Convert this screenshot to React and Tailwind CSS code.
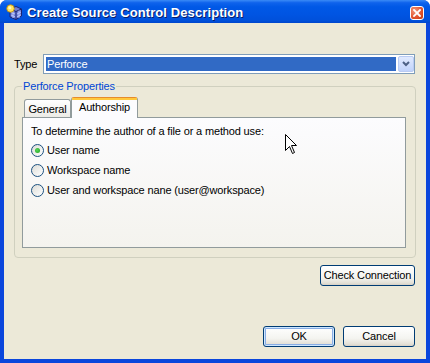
import React from "react";

function TitleIcon() {
  return (
    <svg width="16" height="16" viewBox="0 0 16 16">
      <path d="M4 5 L10 2.5 L15.5 5 L15.5 12 L10 15.5 L4 13 Z" fill="#6f7fd8" stroke="#1b2470" strokeWidth="1" />
      <path d="M4 5 L10 7.5 L15.5 5 M10 7.5 L10 15.5" fill="none" stroke="#1b2470" strokeWidth="1" />
      <path d="M5 8.5 L9 10 M5 11 L9 12.8 M11 10 L15 8 M11 12.8 L15 10.8 M7 6.5 L7 14 M13 6.5 L13 14" fill="none" stroke="#c9d2ff" strokeWidth="0.8" />
      <circle cx="4.5" cy="4.5" r="3.8" fill="#ffe25a" stroke="#b8860b" strokeWidth="0.8" />
      <circle cx="3.8" cy="3.8" r="1.5" fill="#fff8c0" />
    </svg>
  );
}

function Radio({ checked, label }) {
  return (
    <div className="flex items-center h-[20px]">
      <div className="w-[13px] h-[13px] rounded-full border border-[#1C5180] bg-[linear-gradient(135deg,#DCDCD7,#FFFFFF)] flex items-center justify-center">
        {checked && (
          <div className="w-[5px] h-[5px] rounded-full bg-[radial-gradient(circle_at_40%_40%,#55D656,#21A121)]" />
        )}
      </div>
      <span className="ml-[3px]">{label}</span>
    </div>
  );
}

function XPButton({ children, className = "", def = false }) {
  return (
    <button
      className={
        "h-[21px] rounded-[3px] border border-[#003C74] bg-[linear-gradient(180deg,#FFFFFF_0%,#F4F4F0_60%,#E3E0D6_90%,#D6D0C5_100%)] text-[11px] text-black flex items-center justify-center " +
        (def ? "shadow-[inset_0_0_0_1px_#CEE7FF,inset_0_0_0_2px_#89ADE4] " : "") +
        className
      }
    >
      {children}
    </button>
  );
}

export default function App() {
  return (
    <div className="relative w-[430px] h-[363px] flex flex-col bg-[#0A46DC] rounded-t-[7px] overflow-hidden font-['Liberation_Sans',Arial,sans-serif] text-[11px] leading-[13px] tracking-[-0.15px] text-black">
      {/* Title bar */}
      <div className="h-[23px] flex items-start bg-[linear-gradient(180deg,#3A8BF6_0%,#0F63EC_12%,#0058E6_30%,#0054E2_65%,#0050DA_90%,#0046CC_100%)]">
        <div className="ml-[6px] mt-[4px]">
          <TitleIcon />
        </div>
        <div className="ml-[5px] mt-[5px] text-white font-bold text-[13px] leading-[16px] tracking-[0.1px] [text-shadow:1px_1px_0_#0A1E6A]">
          Create Source Control Description
        </div>
        <div className="ml-auto mr-[6px] mt-[6px] w-[14px] h-[14px] rounded-[3px] border border-white bg-[radial-gradient(circle_at_30%_30%,#F39478,#E0512C_60%,#C23A14)] flex items-center justify-center">
          <svg width="8" height="8" viewBox="0 0 8 8">
            <path d="M1 1 L7 7 M7 1 L1 7" stroke="white" strokeWidth="1.8" strokeLinecap="square" />
          </svg>
        </div>
      </div>

      {/* Body */}
      <div className="flex-1 mx-[4px] mb-[4px] bg-[#ECE9D8] flex flex-col pl-[10px] pr-[10px] pt-[31px] pb-[12px]">
        {/* Type row */}
        <div className="flex items-center h-[20px] mr-[1px]">
          <div className="w-[29px]">Type</div>
          <div className="flex-1 h-[20px] border border-[#7F9DB9] bg-white flex items-center">
            <div className="flex-1 h-[14px] ml-[2px] bg-[#316AC5] text-white pl-[1px] leading-[14px]">
              Perforce
            </div>
            <div className="ml-[2px] w-[16px] h-[16px] rounded-[2px] border border-[#B9CBF3] bg-[linear-gradient(180deg,#E1EAFE,#C1D3FB)] flex items-center justify-center">
              <svg width="8" height="6" viewBox="0 0 8 6">
                <path d="M1 1 L4 4 L7 1" fill="none" stroke="#4D6185" strokeWidth="2" />
              </svg>
            </div>
          </div>
        </div>

        {/* Fieldset */}
        <fieldset className="mt-[6px] border border-[#D0D0BF] rounded-[4px] pl-[7px] pr-[9px] pb-[9px] pt-[4px]">
          <legend className="text-[#0046D5] px-[1px] leading-[13px]">Perforce Properties</legend>
          {/* Tabs */}
          <div className="flex items-end h-[20px] pl-[2px]">
            <div className="w-[47px] h-[18px] border border-b-0 border-[#919B9C] rounded-t-[3px] bg-[linear-gradient(180deg,#FFFFFF,#ECEBE6)] flex items-center justify-center pt-[2px]">
              General
            </div>
            <div className="relative z-10 -mb-[1px] w-[67px] h-[21px] border border-b-0 border-[#919B9C] border-t-[#E68B2C] rounded-t-[3px] bg-[#FCFCFE] flex flex-col">
              <div className="h-[2px] bg-[#FFC83C]" />
              <div className="flex-1 flex items-center justify-center pb-[3px]">Authorship</div>
            </div>
          </div>
          {/* Panel */}
          <div className="h-[131px] border border-[#919B9C] bg-[linear-gradient(180deg,#FCFCFE,#F4F3EE)] pl-[8px] pt-[7px]">
            <div>To determine the author of a file or a method use:</div>
            <div className="mt-[2px] flex flex-col">
              <Radio checked label="User name" />
              <Radio label="Workspace name" />
              <Radio label="User and workspace nane (user@workspace)" />
            </div>
          </div>
        </fieldset>

        <div className="flex justify-end mt-[7px] mr-[1px]">
          <XPButton className="w-[95px]">Check Connection</XPButton>
        </div>

        <div className="mt-auto flex justify-end gap-[8px] mr-[1px]">
          <XPButton def className="w-[72px]">OK</XPButton>
          <XPButton className="w-[72px]">Cancel</XPButton>
        </div>
      </div>

      {/* Mouse cursor */}
      <svg className="absolute left-[285px] top-[134px]" width="13" height="21" viewBox="0 0 13 21">
        <path d="M0.5 0.5 L0.5 16.5 L4.5 12.5 L7.5 19.5 L9.5 18.5 L6.5 11.5 L11.5 11.5 Z" fill="white" stroke="black" strokeWidth="1" />
      </svg>
    </div>
  );
}
